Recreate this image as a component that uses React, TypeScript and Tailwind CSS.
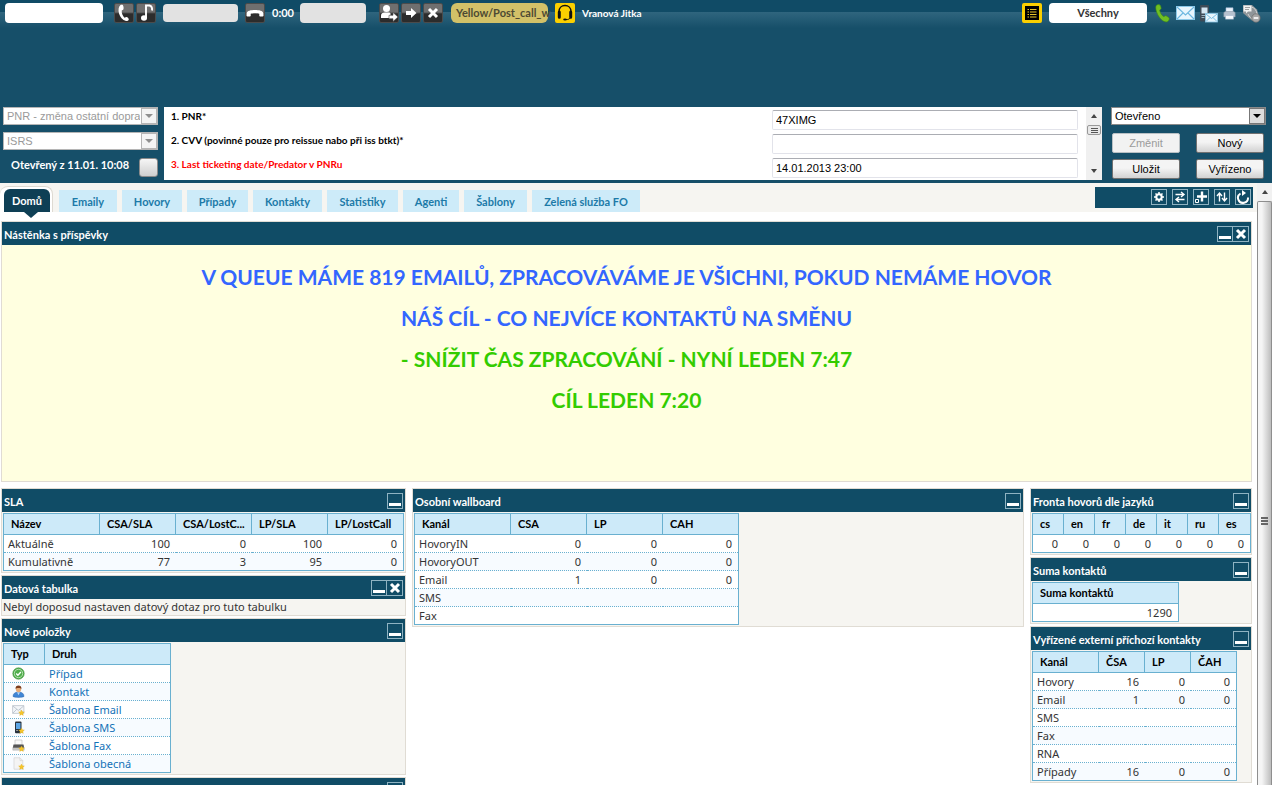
import React, { useState } from 'react';

type Column = { label: string; width: string };

type DataTableProps = {
  columns: Column[];
  rows: React.ReactNode[][];
  width: string;
  textColumns?: number;
};

const TABS = [
  { label: 'Emaily', width: 'w-[58px]' },
  { label: 'Hovory', width: 'w-[60px]' },
  { label: 'Případy', width: 'w-[61px]' },
  { label: 'Kontakty', width: 'w-[69px]' },
  { label: 'Statistiky', width: 'w-[71px]' },
  { label: 'Agenti', width: 'w-[56px]' },
  { label: 'Šablony', width: 'w-[63px]' },
  { label: 'Zelená služba FO', width: 'w-[108px]' },
];

const SLA_COLUMNS = [
  { label: 'Název', width: 'w-[96px]' },
  { label: 'CSA/SLA', width: 'w-[76px]' },
  { label: 'CSA/LostC...', width: 'w-[76px]' },
  { label: 'LP/SLA', width: 'w-[76px]' },
  { label: 'LP/LostCall', width: 'w-[75px]' },
];

const WALLBOARD_COLUMNS = [
  { label: 'Kanál', width: 'w-[96px]' },
  { label: 'CSA', width: 'w-[76px]' },
  { label: 'LP', width: 'w-[76px]' },
  { label: 'CAH', width: 'w-[75px]' },
];

const LANG_COLUMNS = ['cs', 'en', 'fr', 'de', 'it', 'ru', 'es'].map((label) => ({ label, width: 'w-[31px]' }));

const EXTERNAL_COLUMNS = [
  { label: 'Kanál', width: 'w-[66px]' },
  { label: 'ČSA', width: 'w-[46px]' },
  { label: 'LP', width: 'w-[46px]' },
  { label: 'ČAH', width: 'w-[45px]' },
];

const CrossIcon = () => (
  <svg viewBox="0 0 12 12" className="size-3" fill="none" stroke="#fff" strokeWidth="3">
    <path d="M2 2l8 8M10 2l-8 8" />
  </svg>
);

const Star = () => (
  <path d="M9.5 7l.9 1.8 2 .2-1.5 1.4.4 2-1.800-1-1.800 1 .4-2L6.600 9l2-.2z" fill="#f6c62c" stroke="#d9a514" strokeWidth=".3" />
);

const ItemIcon: React.FC<{ kind: string }> = ({ kind }) => (
  <svg viewBox="0 0 13 13" className="ml-1 size-[13px]">
    {kind === 'case' && (
      <>
        <circle cx="6.5" cy="6.5" r="5.7" fill="#4fae4a" stroke="#3d8f3b" strokeWidth=".6" />
        <circle cx="6.5" cy="6.5" r="4.2" fill="none" stroke="#c9e9c4" strokeWidth=".8" />
        <path d="M4.2 6.6l1.7 1.7 3-3.2" fill="none" stroke="#fff" strokeWidth="1.4" />
      </>
    )}
    {kind === 'contact' && (
      <>
        <path d="M1 11.5c0-3 2-4.500 5.500-4.500s5.500 1.500 5.500 4.500c-2 1.200-9 1.200-11 0z" fill="#3f86d6" stroke="#2a62a8" strokeWidth=".5" />
        <path d="M5 7.2h3l-1.5 3z" fill="#b9d8f5" />
        <ellipse cx="6.5" cy="4.3" rx="2.6" ry="3" fill="#e6ab78" />
        <path d="M3.600 4.200C3.200 1.500 4.800.6 6.500.6s3.300.9 2.900 3.600C8.600 2.900 7.500 3 6.500 3s-2.100-.1-2.900 1.200z" fill="#7b3c1c" />
      </>
    )}
    {kind === 'email' && (
      <>
        <path d="M.6 2.6h11.3v7.8H.6z" fill="#f3f6f9" stroke="#b4bcc5" strokeWidth=".7" />
        <path d="M.8 3l5.500 4.400L11.700 3M.8 10.200l4-4M11.700 10.200l-4-4" fill="none" stroke="#aab4bf" strokeWidth=".7" />
        <Star />
      </>
    )}
    {kind === 'sms' && (
      <>
        <rect x="3" y=".6" width="6.5" height="11.6" rx="1" fill="#27313d" />
        <rect x="4" y="2" width="4.5" height="6" fill="#5ca6e6" />
        <path d="M4 9.5h2" stroke="#aaa" strokeWidth=".8" />
        <Star />
      </>
    )}
    {kind === 'fax' && (
      <>
        <path d="M3 1h7v5H3z" fill="#fafafa" stroke="#bbb" strokeWidth=".6" />
        <path d="M1.500 5.500h10l.7 3.500H.8z" fill="#555" />
        <path d="M.8 8.800h11.400v2.400H.8z" fill="#c9c9c9" stroke="#999" strokeWidth=".4" />
        <Star />
      </>
    )}
    {kind === 'general' && (
      <>
        <path d="M2 .8h6l2.800 2.800v8.600H2z" fill="#f4f4f4" stroke="#d3d3d3" strokeWidth=".7" />
        <path d="M8 .8v2.800h2.800" fill="none" stroke="#d3d3d3" strokeWidth=".7" />
        <Star />
      </>
    )}
  </svg>
);

const NEW_ITEMS = [
  ['case', 'Případ'],
  ['contact', 'Kontakt'],
  ['email', 'Šablona Email'],
  ['sms', 'Šablona SMS'],
  ['fax', 'Šablona Fax'],
  ['general', 'Šablona obecná'],
];

const DataTable: React.FC<DataTableProps> = ({ columns, rows, width, textColumns = 1 }) => (
  <table className={`${width} table-fixed border-separate border-spacing-0 border border-[#69b0d0] bg-white`}>
    <thead>
      <tr>
        {columns.map((c, i) => (
          <th
            key={c.label}
            className={`${c.width} h-[21px] border-b border-[#69b0d0] bg-[#cdeaf9] p-0 pl-[7px] text-left text-[11px] leading-4 font-bold whitespace-nowrap text-black ${
              i < columns.length - 1 ? 'border-r' : ''
            }`}
          >
            {c.label}
          </th>
        ))}
      </tr>
    </thead>
    <tbody>
      {rows.map((row, r) => (
        <tr key={r} className="even:bg-[#f7fbff]">
          {row.map((cell, i) => (
            <td
              key={i}
              className={`py-0 pr-1.5 pl-1 font-['Noto_Sans',sans-serif] text-[11px] leading-4 whitespace-nowrap text-[#333] ${
                r < rows.length - 1 ? 'h-[18px] border-b border-dotted border-[#69b0d0]' : 'h-[17px]'
              } ${i < textColumns ? 'text-left' : 'text-right'}`}
            >
              {cell}
            </td>
          ))}
        </tr>
      ))}
    </tbody>
  </table>
);

type PanelProps = { title: string; closable?: boolean; children?: React.ReactNode };

const Panel: React.FC<PanelProps> = ({ title, closable, children }) => {
  const [open, setOpen] = useState(true);

  return (
    <section className="border border-[#e0dcd4] bg-[#f6f5f1]">
      <header className="flex h-[23px] items-center justify-between bg-[#104c66] pr-[2px] pl-[2px]">
        <h2 className="pt-[2px] text-[11px] leading-4 font-bold whitespace-nowrap text-white">{title}</h2>
        <div className="flex">
          <button
            aria-label="Minimalizovat"
            onClick={() => setOpen(!open)}
            className="flex size-4 items-end justify-center border border-[#8fb3c2] pb-[2px]"
          >
            <span className="h-[3px] w-3 bg-white" />
          </button>
          {closable && (
            <button aria-label="Zavřít" className="flex size-4 items-center justify-center border border-l-0 border-[#8fb3c2]">
              <CrossIcon />
            </button>
          )}
        </div>
      </header>
      {open && children}
    </section>
  );
};

const DarkButton: React.FC<{ label: string; children: React.ReactNode }> = ({ label, children }) => (
  <button
    aria-label={label}
    className="flex size-5 shrink-0 items-center justify-center rounded-[2px] border border-[#4b4b4b] bg-linear-to-b from-[#6f6f6f] from-45% to-[#2c2c2c] to-55% text-white"
  >
    {children}
  </button>
);

const TopBar: React.FC = () => (
  <div className="flex h-[30px] items-start justify-between bg-[linear-gradient(#104b66_0,#104b66_12px,#2f657e_12px,#164f69_28px)] pt-[3px] pr-[11px] pl-[5px]">
    <div className="flex h-5 items-center">
      <input aria-label="Číslo" className="h-5 w-[98px] rounded bg-white px-1 text-[11px]" />
      <div className="ml-[11px] flex gap-[2px]">
        <DarkButton label="Volat">
          <svg viewBox="0 0 20 20" className="size-5 shrink-0">
            <path d="M6.500 2C4.500 3.500 4 7 5 10.500c1 3.500 3.500 6.500 7 7.500 1 .2 2.500-.5 2.800-1.600.1-1-1.600-2.600-2.600-2.400l-1.700.7C8.800 13 7.500 10.500 7.700 7.500l1.500-.8c.8-.8.3-3.800-.4-4.600-.5-.6-1.600-.6-2.300-.1z" fill="#fff" />
          </svg>
        </DarkButton>
        <DarkButton label="Tón">
          <svg viewBox="0 0 20 20" className="size-5 shrink-0">
            <ellipse cx="8" cy="15" rx="3" ry="2.700" fill="#fff" />
            <path d="M10 15V2.500h3.500c2.500.8 3 2 2.500 5" fill="none" stroke="#fff" strokeWidth="1.900" />
          </svg>
        </DarkButton>
      </div>
      <input aria-label="Linka 1" disabled className="ml-[7px] h-[18px] w-[75px] rounded bg-[#e2e2e2]" />
      <div className="ml-[7px]">
        <DarkButton label="Zavěsit">
          <svg viewBox="0 0 20 20" className="size-5 shrink-0">
            <path d="M1.500 13V10.500C2 7.500 6 7 10 7s8 .5 8.500 3.500V13c-.5.7-3.700.7-4.200 0v-2.300c-2-.7-6.600-.7-8.600 0V13c-.5.7-3.700.7-4.200 0z" fill="#fff" />
          </svg>
        </DarkButton>
      </div>
      <span className="ml-[7px] w-[28px] text-[11px] leading-4 font-bold text-white">0:00</span>
      <input aria-label="Linka 2" disabled className="h-5 w-[66px] rounded bg-[#e2e2e2]" />
      <div className="ml-[13px] flex gap-[2px]">
        <DarkButton label="Přepojit">
          <svg viewBox="0 0 20 20" className="size-5 shrink-0" fill="#fff">
            <circle cx="7.500" cy="5.500" r="3.500" />
            <path d="M2 15v-2.500C2 10.500 3.500 9.500 6 9.500h3.500c1 0 1.700.4 2 1V15z" />
            <path d="M10 12.300h4V9.500l5 4.500-5 4.500v-2.800h-4z" stroke="#4a4a4a" strokeWidth=".6" />
          </svg>
        </DarkButton>
        <DarkButton label="Dále">
          <svg viewBox="0 0 20 20" className="size-5 shrink-0" fill="#fff">
            <path d="M5 8h5V5l5.500 5-5.500 5v-3H5z" />
          </svg>
        </DarkButton>
        <DarkButton label="Zrušit">
          <CrossIcon />
        </DarkButton>
      </div>
      <div className="ml-2 h-5 w-[97px] rounded-md bg-[#d2c168] pl-[5px] text-[11px] leading-5 font-bold whitespace-nowrap text-[#4d4a33]">
        Yellow/Post_call_w
      </div>
      <button aria-label="Agent" className="ml-[7px] size-5 rounded-[2px] bg-[#fbcf00]">
        <svg viewBox="0 0 20 20" className="size-5" fill="none" stroke="#111">
          <path d="M4 11V8.500C4 5 6.500 2.600 10 2.600S16 5 16 8.500V11" strokeWidth="1.500" />
          <path d="M4.300 9v5.200M15.700 9v5.200" strokeWidth="3" strokeLinecap="round" />
          <path d="M15.500 14.500c-1 1.700-2.500 2.100-4.500 2.100" strokeWidth="1" />
          <ellipse cx="10" cy="16.600" rx="1.800" ry="1" fill="#111" stroke="none" />
        </svg>
      </button>
      <span className="ml-[7px] text-[10px] leading-4 font-bold text-white">Vranová Jitka</span>
    </div>

    <div className="flex h-5 items-center">
      <button aria-label="Seznam" className="flex size-5 items-center justify-center rounded-[2px] border-[3px] border-[#fbcf00] bg-black">
        <svg viewBox="0 0 14 14" className="size-[14px] shrink-0" stroke="#e8c52a" strokeWidth="1">
          <path d="M2.500 3.500h1.500M5 3.500h6.500M2.500 6h1.500M5 6h6.500M2.500 8.500h1.500M5 8.500h6.500M2.500 11h1.500M5 11h6.500" />
        </svg>
      </button>
      <button className="ml-[7px] h-5 w-[98px] rounded bg-white text-[11px] leading-5 font-bold text-[#333]">Všechny</button>
      <svg viewBox="0 0 15 19" className="ml-[8px] h-[19px] w-[15px]">
        <path d="M1.500 1.200C3 .2 5 .5 5.600 2l.6 2.300c0 1.200-1.800 1.200-1.500 2.400.6 2.200 1.900 4.300 3.600 5.700.9.6 1.600-1 2.700-.7l2.800 1.900c1 1 .2 3.200-1.200 4-2 1-5.600-.6-8-4C1.600 9.800-.4 3 1.500 1.200z" fill="#6fbe23" stroke="#3f8d12" strokeWidth=".6" />
      </svg>
      <svg viewBox="0 0 19 15" className="ml-[6px] h-[15px] w-[19px]">
        <rect x=".5" y=".5" width="18" height="13" fill="#e8f6fd" stroke="#8cc9e8" />
        <path d="M1 13l6.500-6.500M18 13l-6.500-6.500M1 1l8.500 8L18 1" fill="none" stroke="#6db8e0" strokeWidth="1.100" />
      </svg>
      <svg viewBox="0 0 19 19" className="ml-[4px] size-[19px]">
        <rect x="1" y="1" width="9" height="16.500" rx="1" fill="#3f4b57" />
        <rect x="2.500" y="3.500" width="6" height="6" fill="#d5e6f2" />
        <path d="M2.500 11.500h5M2.500 13.500h3" stroke="#9db3c2" />
        <rect x="6.500" y="9.500" width="12" height="8.500" fill="#e8f6fd" stroke="#8cc9e8" strokeWidth=".8" />
        <path d="M7 10l5.500 4.500L18 10M7 17.500l4-4M18 17.500l-4-4" fill="none" stroke="#6db8e0" strokeWidth=".9" />
      </svg>
      <svg viewBox="0 0 13 13" className="ml-[5px] size-[13px]">
        <path d="M3 .8h7v5H3z" fill="#e9f1fb" stroke="#a9bdd6" strokeWidth=".6" />
        <path d="M.8 5.500l1.500-1h8.400l1.500 1V10H.8z" fill="#b6c1cf" stroke="#7e8c9d" strokeWidth=".5" />
        <path d="M2.500 8.500h8v3.700h-8z" fill="#f6f9fd" stroke="#9fb1c8" strokeWidth=".5" />
      </svg>
      <svg viewBox="0 0 19 19" className="ml-[6px] size-[19px]">
        <path d="M1 1h9l5 4.500 1.500 5.500-6 6-6-5L1 9z" fill="#8f9599" />
        <path d="M1.500 1.500h8v6H6l-2 2v-2H1.500z" fill="#f2f2f2" />
        <path d="M3 3.500h5M3 5.500h4" stroke="#8a8a8a" strokeWidth=".8" />
        <path d="M9.500 3c3 1 5 3 5.500 7M6 10c1.500 3 3 4.500 6 6" fill="none" stroke="#d8d8d8" strokeWidth=".9" />
        <circle cx="14" cy="14" r="4.200" fill="#a7a7a7" stroke="#6c6c6c" strokeWidth=".7" />
        <path d="M11.700 14h4.600" stroke="#fff" strokeWidth="1.600" />
      </svg>
    </div>
  </div>
);

type DropDownProps = { label: string; value: string; disabled?: boolean };

const DropDown: React.FC<DropDownProps> = ({ label, value, disabled }) => (
  <div className="relative">
    <select
      aria-label={label}
      disabled={disabled}
      className={`block h-[18px] w-full appearance-none border bg-white pr-[17px] pl-[3px] font-['Liberation_Sans',sans-serif] text-[11px] leading-4 opacity-100 ${
        disabled ? 'border-[#b5b5b5] text-[#9a9a9a]' : 'border-[#8a8a8a] text-black'
      }`}
    >
      <option>{value}</option>
    </select>
    <span
      className={`pointer-events-none absolute top-px right-px flex h-4 w-4 items-center justify-center border ${
        disabled ? 'border-[#b5b5b5] bg-[#f4f4f4]' : 'border-[#777] bg-[#dcdcdc]'
      }`}
    >
      <svg viewBox="0 0 8 4" className="h-1 w-2">
        <path d="M0 0h8L4 4z" fill={disabled ? '#8f8f8f' : '#000'} />
      </svg>
    </span>
  </div>
);

const FormButton: React.FC<{ disabled?: boolean; children: string }> = ({ disabled, children }) => (
  <button
    disabled={disabled}
    className={`h-5 w-[68px] rounded-[2px] border font-['Liberation_Sans',sans-serif] text-[11px] leading-4 ${
      disabled ? 'border-[#b9c0c4] bg-[#f2f2f2] text-[#9b9b9b]' : 'border-[#707070] bg-linear-to-b from-[#f4f4f4] from-45% to-[#d2d2d2] text-black'
    }`}
  >
    {children}
  </button>
);

const FIELDS = [
  { id: 'pnr', label: '1. PNR*', value: '47XIMG', color: 'text-black' },
  { id: 'cvv', label: '2. CVV (povinné pouze pro reissue nabo při iss btkt)*', value: '', color: 'text-black' },
  { id: 'ticketing', label: '3. Last ticketing date/Predator v PNRu', value: '14.01.2013 23:00', color: 'text-[#f00]' },
];

const ContactForm: React.FC = () => (
  <div className="mt-[77px] flex h-[76px]">
    <div className="flex w-[164px] shrink-0 flex-col gap-[7px] pr-[6px] pl-[3px]">
      <DropDown label="Kategorie" value="PNR - změna ostatní doprava" disabled />
      <DropDown label="Systém" value="ISRS" disabled />
      <div className="flex items-start justify-between">
        <span className="pl-2 text-[11px] leading-4 font-bold whitespace-nowrap text-white">Otevřený z 11.01. 10:08</span>
        <button aria-label="Upravit" className="mt-px h-[19px] w-[19px] rounded-[3px] border border-[#8b8b8b] bg-linear-to-b from-[#f6f6f6] to-[#cfcfcf]" />
      </div>
    </div>

    <form className="flex h-[73px] min-w-0 flex-1 bg-white">
      <div className="flex flex-1 flex-col gap-1 pt-[3px] pr-2 pl-[7px]">
        {FIELDS.map((f) => (
          <div key={f.id} className="flex items-start">
            <label htmlFor={f.id} className={`flex-1 text-[10px] leading-3 font-bold ${f.color}`}>
              {f.label}
            </label>
            <input
              id={f.id}
              defaultValue={f.value}
              className="h-5 w-[306px] rounded-[2px] border border-[#e2e3ea] border-t-[#abadb3] bg-white px-[3px] font-['Liberation_Sans',sans-serif] text-[11px] text-black"
            />
          </div>
        ))}
      </div>
      <div className="flex w-4 flex-col items-center justify-between bg-[#f0f0f0] py-[7px]">
        <div className="flex flex-col items-center gap-[7px]">
          <svg viewBox="0 0 6 4" className="h-1 w-[6px]">
            <path d="M0 4h6L3 0z" fill="#444" />
          </svg>
          <div className="flex h-[10px] w-[14px] flex-col items-center justify-center gap-px rounded-[2px] border border-[#999] bg-[#e8e8e8]">
            <span className="h-px w-[7px] bg-[#555]" />
            <span className="h-px w-[7px] bg-[#555]" />
            <span className="h-px w-[7px] bg-[#555]" />
          </div>
        </div>
        <svg viewBox="0 0 6 4" className="h-1 w-[6px]">
          <path d="M0 0h6L3 4z" fill="#444" />
        </svg>
      </div>
    </form>

    <div className="w-[170px] shrink-0 pr-[6px] pl-[9px]">
      <DropDown label="Stav" value="Otevřeno" />
      <div className="mt-2 flex justify-between pr-[2px] pl-px">
        <FormButton disabled>Změnit</FormButton>
        <FormButton>Nový</FormButton>
      </div>
      <div className="mt-[6px] flex justify-between pr-[2px] pl-px">
        <FormButton>Uložit</FormButton>
        <FormButton>Vyřízeno</FormButton>
      </div>
    </div>
  </div>
);

const ToolButton: React.FC<{ label: string; children: React.ReactNode }> = ({ label, children }) => (
  <button aria-label={label} className="size-4 border border-[#8fb3c2]">
    <svg viewBox="0 0 14 14" className="size-[14px]" fill="none" stroke="#fff">
      {children}
    </svg>
  </button>
);

const TabBar: React.FC = () => (
  <div className="flex h-[29px] justify-between bg-[#f6f5f1] pr-1">
    <nav className="flex items-end gap-[5px]">
      <div className="relative mr-px h-[26px] w-[53px] rounded-t-lg border-t border-r border-[#dedad2] bg-white pt-[2px] pl-1">
        <a href="#domu" className="block h-[23px] w-[46px] rounded-t-md bg-[#0e3f55] text-center text-[11px] leading-[23px] font-bold text-white">
          Domů
        </a>
        <svg viewBox="0 0 14 6" className="absolute top-[25px] left-[24px] h-[6px] w-[14px]">
          <path d="M0 0h14L7 6z" fill="#0e3f55" />
        </svg>
      </div>
      {TABS.map((t) => (
        <a
          key={t.label}
          href="#"
          className={`${t.width} block h-[22px] bg-[#cdebf9] text-center text-[11px] leading-6 font-bold whitespace-nowrap text-[#1c7aa8]`}
        >
          {t.label}
        </a>
      ))}
    </nav>
    <div className="mt-1 flex h-[21px] w-[158px] items-center justify-end gap-[5px] bg-[#104c66] pr-[2px] pb-px">
      <ToolButton label="Nastavení">
        <circle cx="7" cy="7" r="2.700" strokeWidth="2" />
        <path d="M7 2v2M7 10v2M2 7h2M10 7h2M3.500 3.500l1.300 1.300M9.200 9.200l1.300 1.300M3.500 10.500l1.300-1.300M9.200 4.800l1.300-1.300" strokeWidth="1.500" />
      </ToolButton>
      <ToolButton label="Přepnout">
        <path d="M2.500 4.500h8M8 2l3 2.500L8 7M11.500 9.500h-8M6 7L3 9.500 6 12" strokeWidth="1.400" />
      </ToolButton>
      <ToolButton label="Přidat">
        <path d="M8 1.500v10M3 6.500h10" strokeWidth="2.400" />
        <path d="M1.500 9.500h3v3h-3z" fill="#104c66" strokeWidth="1" />
      </ToolButton>
      <ToolButton label="Seřadit">
        <path d="M4.500 11.500v-8M2 6l2.500-3L7 6M9.500 2.500v8M7 8l2.500 3L12 8" strokeWidth="1.400" />
      </ToolButton>
      <ToolButton label="Obnovit">
        <path d="M4.500 3.500A5 5 0 1 0 12 7.500" strokeWidth="2" />
        <path d="M6 0v6l4-3z" fill="#fff" stroke="none" />
      </ToolButton>
    </div>
  </div>
);

const Scrollbar: React.FC = () => (
  <div className="flex w-[15px] shrink-0 flex-col bg-[#f1f1f1]">
    <div className="flex h-[18px] shrink-0 items-center justify-center">
      <svg viewBox="0 0 6 4" className="h-1 w-[6px]">
        <path d="M0 4h6L3 0z" fill="#444" />
      </svg>
    </div>
    <div className="flex flex-1 flex-col items-center rounded-t-[2px] border border-b-0 border-[#8e8e8e] bg-linear-to-r from-[#f5f5f5] from-30% to-[#bdbdbd] pt-[315px]">
      <div className="flex flex-col gap-px">
        <span className="h-[2px] w-[7px] bg-[#666]" />
        <span className="h-[2px] w-[7px] bg-[#666]" />
        <span className="h-[2px] w-[7px] bg-[#666]" />
      </div>
    </div>
  </div>
);

const App: React.FC = () => {
  const newItems = NEW_ITEMS.map(([kind, label]) => [
    <ItemIcon kind={kind} />,
    <a href="#" className="text-[#1272b8]">
      {label}
    </a>,
  ]);

  return (
    <div className="flex h-screen flex-col overflow-hidden bg-white font-[Lato,sans-serif]">
      <div className="shrink-0 bg-[#164f69]">
        <TopBar />
        <ContactForm />
      </div>

      <div className="flex min-h-0 flex-1">
        <main className="min-w-0 flex-1 overflow-hidden">
          <TabBar />
          <div className="mt-[9px] flex flex-col gap-[6px] pr-[5px] pl-px">
            <Panel title="Nástěnka s příspěvky" closable>
              <div className="h-[236px] bg-[#ffffe0] pt-[11px] text-center text-[21px] leading-[41px] font-bold text-[#3366ff]">
                <p>V QUEUE MÁME 819 EMAILŮ, ZPRACOVÁVÁME JE VŠICHNI, POKUD NEMÁME HOVOR</p>
                <p>NÁŠ CÍL - CO NEJVÍCE KONTAKTŮ NA SMĚNU</p>
                <p className="text-[#33cc00]">- SNÍŽIT ČAS ZPRACOVÁNÍ - NYNÍ LEDEN 7:47</p>
                <p className="text-[#33cc00]">CÍL LEDEN 7:20</p>
              </div>
            </Panel>

            <div className="flex items-start gap-[6px]">
              <div className="flex w-[405px] shrink-0 flex-col gap-[2px]">
                <Panel title="SLA">
                  <div className="p-px">
                    <DataTable
                      width="w-[401px]"
                      columns={SLA_COLUMNS}
                      rows={[
                        ['Aktuálně', 100, 0, 100, 0],
                        ['Kumulativně', 77, 3, 95, 0],
                      ]}
                    />
                  </div>
                </Panel>
                <Panel title="Datová tabulka" closable>
                  <p className="pl-px font-['Noto_Sans',sans-serif] text-[11px] leading-4 text-[#333]">
                    Nebyl doposud nastaven datový dotaz pro tuto tabulku
                  </p>
                </Panel>
                <Panel title="Nové položky">
                  <div className="p-px">
                    <DataTable
                      width="w-[168px]"
                      columns={[
                        { label: 'Typ', width: 'w-[41px]' },
                        { label: 'Druh', width: 'w-[125px]' },
                      ]}
                      rows={newItems}
                      textColumns={2}
                    />
                  </div>
                </Panel>
                <Panel title="" />
              </div>

              <div className="min-w-0 flex-1">
                <Panel title="Osobní wallboard">
                  <div className="p-px">
                    <DataTable
                      width="w-[325px]"
                      columns={WALLBOARD_COLUMNS}
                      rows={[
                        ['HovoryIN', 0, 0, 0],
                        ['HovoryOUT', 0, 0, 0],
                        ['Email', 1, 0, 0],
                        ['SMS', '', '', ''],
                        ['Fax', '', '', ''],
                      ]}
                    />
                  </div>
                </Panel>
              </div>

              <div className="flex w-[222px] shrink-0 flex-col gap-[2px]">
                <Panel title="Fronta hovorů dle jazyků">
                  <div className="p-px">
                    <DataTable width="w-[218px]" columns={LANG_COLUMNS} rows={[[0, 0, 0, 0, 0, 0, 0]]} textColumns={0} />
                  </div>
                </Panel>
                <Panel title="Suma kontaktů">
                  <div className="p-px">
                    <DataTable width="w-[147px]" columns={[{ label: 'Suma kontaktů', width: 'w-[145px]' }]} rows={[[1290]]} textColumns={0} />
                  </div>
                </Panel>
                <Panel title="Vyřízené externí příchozí kontakty">
                  <div className="p-px">
                    <DataTable
                      width="w-[205px]"
                      columns={EXTERNAL_COLUMNS}
                      rows={[
                        ['Hovory', 16, 0, 0],
                        ['Email', 1, 0, 0],
                        ['SMS', '', '', ''],
                        ['Fax', '', '', ''],
                        ['RNA', '', '', ''],
                        ['Případy', 16, 0, 0],
                      ]}
                    />
                  </div>
                </Panel>
              </div>
            </div>
          </div>
        </main>
        <Scrollbar />
      </div>
    </div>
  );
};

export default App;
